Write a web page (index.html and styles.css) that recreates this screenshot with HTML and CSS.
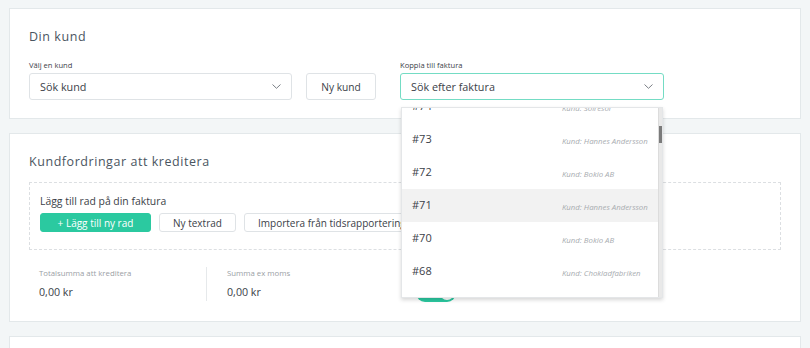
FILE: index.html
```html
<!DOCTYPE html>
<html lang="sv">
<head>
<meta charset="utf-8">
<link rel="stylesheet" href="styles.css">
</head>
<body>
<div class="page">
  <section class="card card-customer">
    <h2 class="card-title">Din kund</h2>
    <div class="form-row">
      <div class="field field-customer">
        <label class="field-label">Välj en kund</label>
        <div class="select">
          <span class="select-text">Sök kund</span>
          <svg class="chevron" width="9" height="5" viewBox="0 0 9 5"><path d="M0.5 0.5 L4.5 4.3 L8.5 0.5" fill="none" stroke="#7a7f85" stroke-width="1"/></svg>
        </div>
      </div>
      <button class="btn btn-outline btn-new">Ny kund</button>
      <div class="field field-invoice">
        <label class="field-label">Koppla till faktura</label>
        <div class="select select-active">
          <span class="select-text">Sök efter faktura</span>
          <svg class="chevron" width="9" height="5" viewBox="0 0 9 5"><path d="M0.5 0.5 L4.5 4.3 L8.5 0.5" fill="none" stroke="#7a7f85" stroke-width="1"/></svg>
        </div>
        <div class="dropdown">
          <ul class="dropdown-list">
            <li class="option"><span class="option-no">#74</span><span class="option-cust">Kund: Solresor</span></li>
            <li class="option"><span class="option-no">#73</span><span class="option-cust">Kund: Hannes Andersson</span></li>
            <li class="option"><span class="option-no">#72</span><span class="option-cust">Kund: Bokio AB</span></li>
            <li class="option option-hover"><span class="option-no">#71</span><span class="option-cust">Kund: Hannes Andersson</span></li>
            <li class="option"><span class="option-no">#70</span><span class="option-cust">Kund: Bokio AB</span></li>
            <li class="option"><span class="option-no">#68</span><span class="option-cust">Kund: Chokladfabriken</span></li>
            <li class="option"><span class="option-no">#67</span><span class="option-cust">Kund: Bokio AB</span></li>
          </ul>
          <div class="scrolltrack"><div class="scrollthumb"></div></div>
        </div>
      </div>
    </div>
  </section>

  <section class="card card-claims">
    <h2 class="card-title">Kundfordringar att kreditera</h2>
    <div class="rows-box">
      <p class="rows-text">Lägg till rad på din faktura</p>
      <div class="rows-actions">
        <button class="btn btn-primary">+ Lägg till ny rad</button>
        <button class="btn btn-outline btn-small">Ny textrad</button>
        <button class="btn btn-outline btn-import">Importera från tidsrapportering</button>
      </div>
    </div>
    <div class="summary">
      <div class="sum-col sum-first">
        <div class="sum-label">Totalsumma att kreditera</div>
        <div class="sum-value">0,00 kr</div>
      </div>
      <div class="sum-col sum-second">
        <div class="sum-label">Summa ex moms</div>
        <div class="sum-value">0,00 kr</div>
      </div>
      <div class="sum-col sum-third">
        <span class="toggle"><span class="toggle-knob"></span></span>
      </div>
    </div>
  </section>

  <section class="card card-next"></section>
</div>
</body>
</html>
```

FILE: styles.css
```css
* { box-sizing: border-box; }
html, body { margin: 0; padding: 0; }
body {
  background: #f3f6f7;
  font-family: "Open Sans", "Liberation Sans", sans-serif;
  color: #3b4148;
  width: 810px;
  height: 348px;
  overflow: hidden;
}
.page {
  padding: 8px 9px 0;
  display: flex;
  flex-direction: column;
  gap: 14px;
}
.card {
  background: #fff;
  border: 1px solid #e3e8ea;
  padding: 18px 19px;
}
.card-title {
  margin: 0;
  font-size: 12.5px;
  font-weight: 400;
  line-height: 20px;
  letter-spacing: 0.55px;
  color: #4a5561;
}
.card-customer .card-title { margin-bottom: 12px; }
.form-row {
  display: flex;
  align-items: flex-end;
}
.field { display: flex; flex-direction: column; }
.field-customer { width: 263px; }
.field-invoice { width: 264px; margin-left: 24px; position: relative; }
.field-label {
  font-size: 7.6px;
  line-height: 12px;
  color: #3b4148;
  margin-bottom: 2px;
}
.select {
  height: 27px;
  border: 1px solid #dfe3e6;
  border-radius: 3px;
  display: flex;
  align-items: center;
  justify-content: space-between;
  padding: 0 10px 0 10px;
}
.select-text { font-size: 10.8px; color: #3b4148; }
.select-active {
  border: 1.5px solid #74dcc4;
  padding-left: 10px;
}
.btn {
  font-family: inherit;
  border-radius: 3px;
  cursor: pointer;
}
.btn-outline {
  background: #fff;
  border: 1px solid #dfe3e6;
  color: #3b4148;
}
.btn-new {
  width: 70px;
  height: 27px;
  margin-left: 14px;
  font-size: 10.2px;
  padding: 0;
}
.dropdown {
  position: absolute;
  top: 48px;
  left: 1px;
  right: 1px;
  height: 191px;
  background: #fff;
  border: 1px solid #e4e6e8;
  box-shadow: 0 2px 4px rgba(0,0,0,0.16);
  display: flex;
  z-index: 5;
}
.dropdown-list {
  list-style: none;
  margin: 0;
  padding: 0;
  flex: 1;
  overflow: hidden;
}
.option {
  height: 33px;
  display: grid;
  grid-template-columns: 150px 1fr;
  align-items: center;
  padding: 0 10px;
}
.option:first-child { margin-top: -18px; }
.option-hover { background: #f2f2f2; }
.option-no { font-size: 11px; color: #3b4148; margin-top: -2px; }
.option-cust {
  font-size: 7.8px;
  font-style: italic;
  color: #a8acb0;
  margin-top: 2px;
}
.scrolltrack {
  width: 4px;
  background: #e9e9e9;
  border-left: 1px solid #dcdcdc;
}
.scrollthumb {
  margin-top: 18px;
  height: 17px;
  background: #7b7b7b;
}

.card-claims { padding-top: 18px; padding-bottom: 20px; }
.card-claims .card-title { margin-bottom: 10px; }
.rows-box {
  border: 1px dashed #dcdfe2;
  padding: 11px 10px 10px;
  height: 68px;
}
.rows-text {
  margin: 0 0 5px;
  font-size: 10.4px;
  line-height: 14px;
  color: #3b4148;
}
.rows-actions { display: flex; gap: 8px; }
.rows-actions .btn {
  height: 19px;
  font-size: 10px;
  padding: 0;
}
.btn-primary {
  width: 111px;
  background: #2bc9a0;
  border: 1px solid #2bc9a0;
  color: #fff;
}
.btn-small { width: 77px; font-size: 9.8px; }
.rows-actions .btn-import { padding: 0 13px; white-space: nowrap; }
.summary {
  display: flex;
  margin-top: 17px;
  height: 34px;
}
.sum-col { display: flex; flex-direction: column; justify-content: center; }
.sum-first {
  width: 178px;
  padding-left: 10px;
  border-right: 1px solid #e6e9eb;
}
.sum-second { width: 209px; padding-left: 20px; }
.sum-label { font-size: 7.8px; color: #9aa0a5; line-height: 12px; }
.sum-value { font-size: 10.7px; color: #3b4148; line-height: 18px; margin-top: 4px; }
.sum-third { justify-content: flex-end; }
.toggle {
  display: block;
  width: 40px;
  height: 18px;
  margin-bottom: -1px;
  border-radius: 9px;
  background: #2bc9a0;
  position: relative;
}
.toggle-knob {
  position: absolute;
  right: 2px;
  top: 2px;
  width: 14px;
  height: 14px;
  border-radius: 50%;
  background: #fff;
}
.card-next { height: 40px; }
```
